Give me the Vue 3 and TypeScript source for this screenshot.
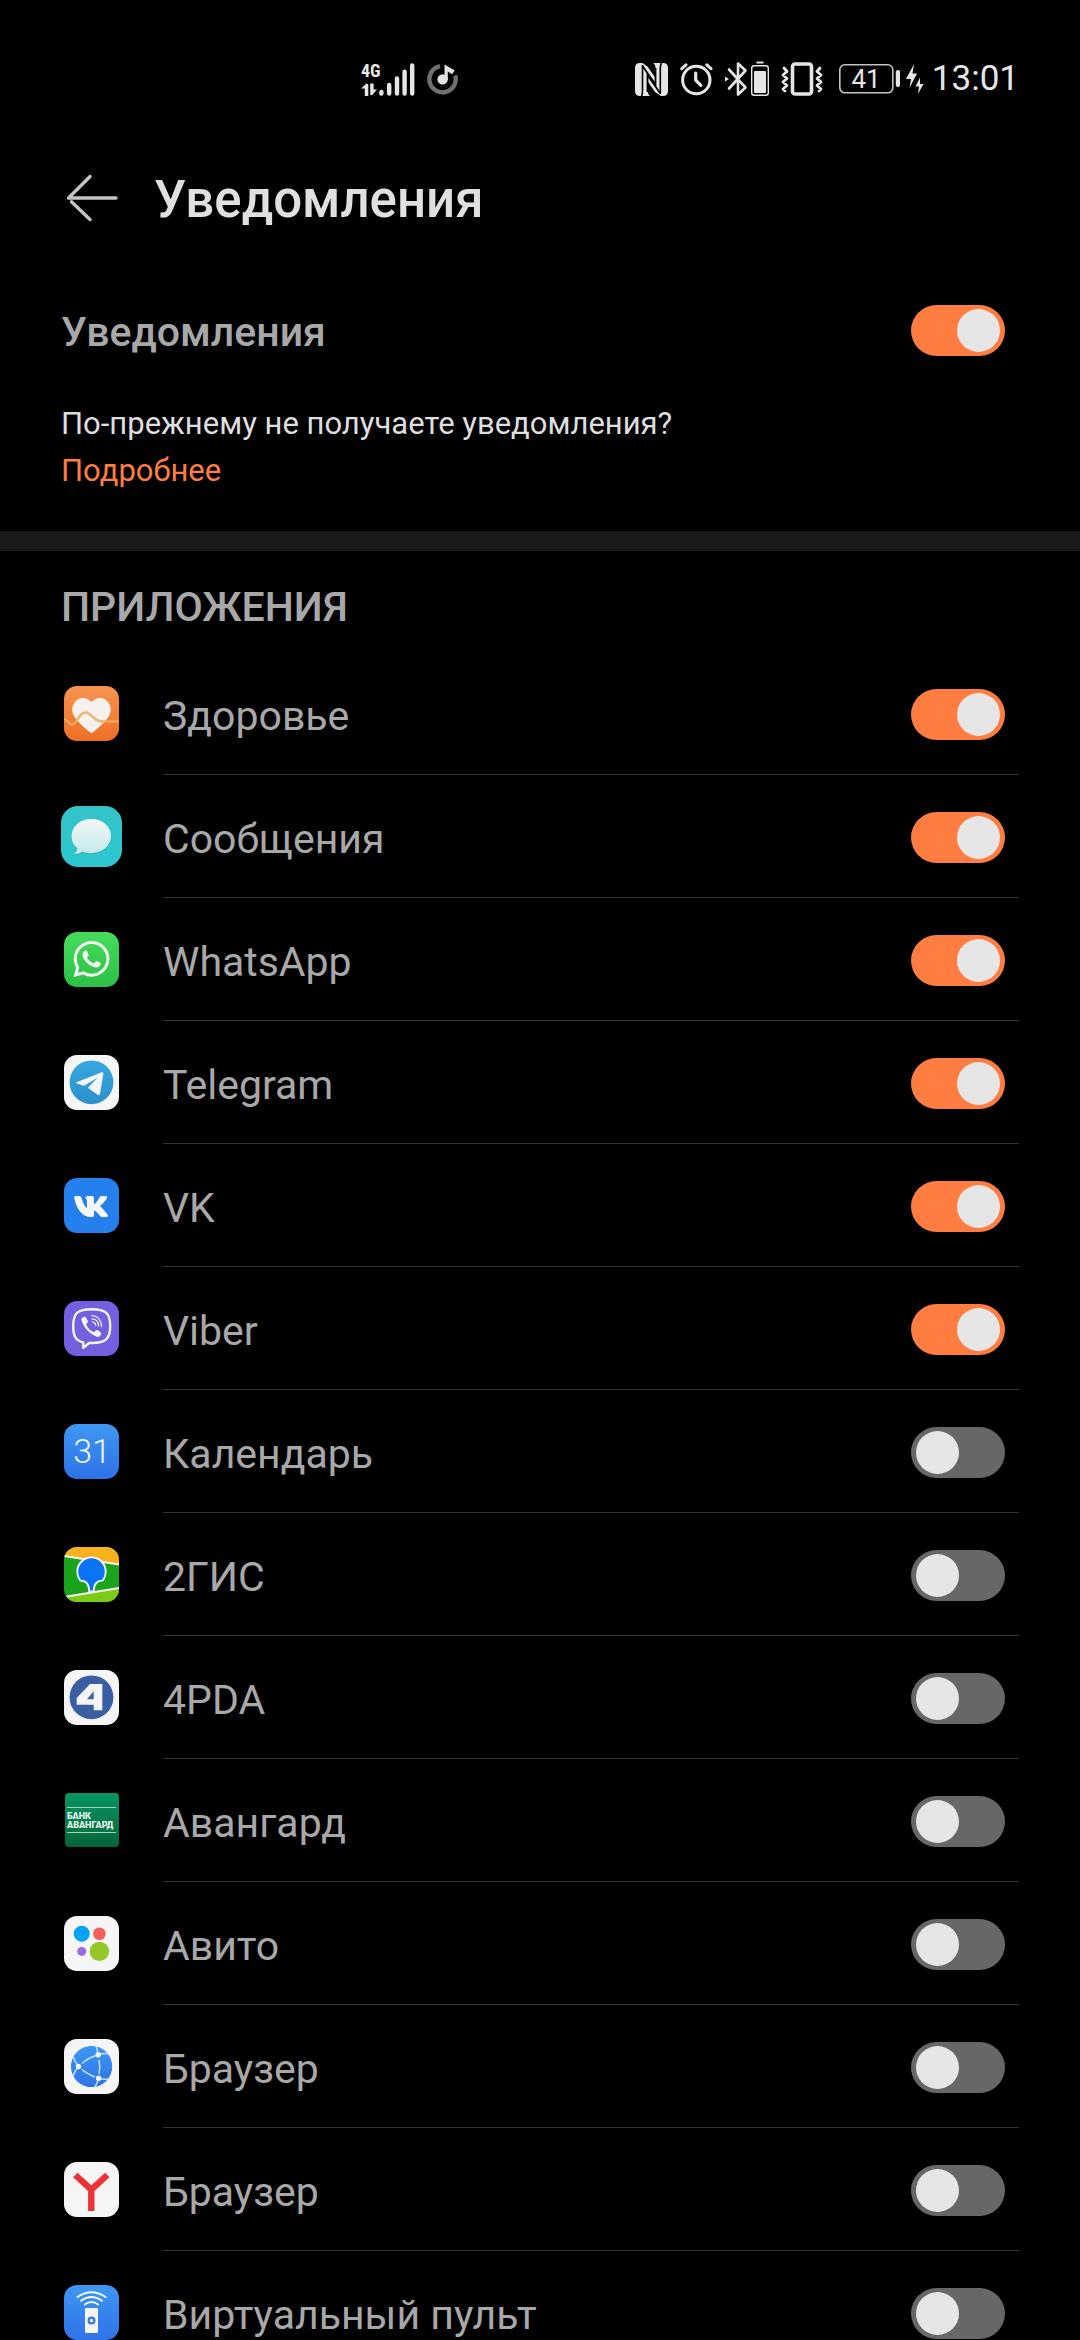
<script setup lang="ts">
import { ref } from 'vue'

interface AppEntry {
  id: string
  name: string
  enabled: boolean
}

const allEnabled = ref(true)

const apps = ref<AppEntry[]>([
  { id: 'health', name: 'Здоровье', enabled: true },
  { id: 'messages', name: 'Сообщения', enabled: true },
  { id: 'whatsapp', name: 'WhatsApp', enabled: true },
  { id: 'telegram', name: 'Telegram', enabled: true },
  { id: 'vk', name: 'VK', enabled: true },
  { id: 'viber', name: 'Viber', enabled: true },
  { id: 'calendar', name: 'Календарь', enabled: false },
  { id: '2gis', name: '2ГИС', enabled: false },
  { id: '4pda', name: '4PDA', enabled: false },
  { id: 'avangard', name: 'Авангард', enabled: false },
  { id: 'avito', name: 'Авито', enabled: false },
  { id: 'browser', name: 'Браузер', enabled: false },
  { id: 'yandex', name: 'Браузер', enabled: false },
  { id: 'remote', name: 'Виртуальный пульт', enabled: false },
])
</script>

<template>
  <div class="screen">
    <div class="status">
      <div class="status-group">
        <svg width="54" height="42" viewBox="0 -4 54 42" fill="#e6e6e6">
          <text class="network" x="0" y="15">4G</text>
          <path d="M7.3 34H3.8V26.5H0L5.5 21.5Q7.3 21.5 7.3 23ZM9.2 21.5H12.6V27.5H16L11.3 33Q9.2 34 9.2 32Z" />
          <g stroke="#e6e6e6" stroke-width="4.4" stroke-linecap="round">
            <path d="M20.4 30v1.5M28.2 23v8.5M36 16.5v15M43.6 9.8v21.7M51.2 3.5v28" />
          </g>
        </svg>
        <svg width="32" height="32" viewBox="0 0 32 32">
          <path d="M13 3.2A13.2 13.2 0 1 0 28.2 12.4" fill="none" stroke="#707070" stroke-width="4.4" />
          <circle cx="15.6" cy="16.4" r="5.2" fill="#e2e2e2" />
          <path d="M17.5 17V1.6L27.8 7.6 25 11.2 20.8 8.4V17Z" fill="#e2e2e2" />
        </svg>
      </div>
      <div class="status-group">
        <svg width="33" height="33" viewBox="0 0 33 33">
          <path fill="#e6e6e6" d="M5 0H7.5L12.5 3.5 20.5 15V6Q20.5 2 18.5 0H28Q33 0 33 5V28Q33 33 28 33H26L20 29 12.5 18V27Q12.5 31 15 33H5Q0 33 0 28V5Q0 0 5 0Z" />
          <path fill="none" stroke="#000" stroke-width="1.6" d="M7.5 2V28Q7.5 31 6.5 33M25.3 31V5Q25.3 2 26.5 0" />
          <path fill="none" stroke="#000" stroke-width="1.8" d="M7.5 3 20.5 21.5V5M12.5 29V12L25 30" />
        </svg>
        <svg width="33" height="34" viewBox="0 0 33 34" fill="none" stroke="#e6e6e6" stroke-linecap="round">
          <circle cx="16.3" cy="18" r="13.7" stroke-width="3" />
          <path d="M15.7 11V18L20.8 23.4" stroke-width="3.2" />
          <path d="M1.8 6.7 6 2.8M31 6.7 26.8 2.8" stroke-width="3" />
        </svg>
        <svg width="44" height="36" viewBox="0 0 44 36" fill="none" stroke="#e6e6e6">
          <path d="M4 8.5 20.5 26.5 13 33.5V2.5L20.5 9.5 4 27.5" stroke-width="2.6" stroke-linejoin="round" stroke-linecap="round" />
          <path d="M0 15.5 4 18 0 20.5Z" fill="#e6e6e6" stroke="none" />
          <rect x="26.7" y="4.7" width="16.6" height="29.6" rx="2.5" stroke-width="1.4" />
          <path d="M31.5 1.5h7" stroke-width="2" />
          <rect x="29" y="10" width="12" height="22" rx="1" fill="#e6e6e6" stroke="none" />
        </svg>
        <svg width="42" height="34" viewBox="0 0 42 34" fill="none" stroke="#e6e6e6" stroke-linejoin="round" stroke-linecap="round">
          <rect x="11.5" y="2" width="19" height="30" rx="2.5" stroke-width="3.6" />
          <path d="M3 6l3 3.5-4 3.5 4 3.5-4 3.5 4 3.5-4 3.5 2 2M39 6l-3 3.5 4 3.5-4 3.5 4 3.5-4 3.5 4 3.5-2 2" stroke-width="2.8" />
        </svg>
        <svg class="battery" width="61" height="30" viewBox="0 0 61 30">
          <rect x="0.8" y="0.8" width="53" height="28" rx="5" fill="none" stroke="#c4c4c4" stroke-width="1.6" />
          <rect x="56.8" y="6" width="4.2" height="17" rx="2" fill="#e6e6e6" />
          <text class="battery-level" x="27" y="24" text-anchor="middle">41</text>
        </svg>
        <svg class="bolts" width="18" height="30" viewBox="0 0 18 30" fill="#e6e6e6">
          <path d="M8 0 0 15H5L3.5 24 11 9.5H6.5ZM14 13.5 9.5 22.5H13L12 30 17.5 20H14Z" />
        </svg>
        <time class="clock">13:01</time>
      </div>
    </div>

    <header class="header">
      <button class="back" type="button" aria-label="Назад">
        <svg width="52" height="48" viewBox="0 0 52 48" fill="none" stroke="#c4c4c4" stroke-width="3.4" stroke-linecap="round">
          <path d="M24 2.5 2.5 24H50M5.5 27.8 24 45.5" stroke-linejoin="round" />
        </svg>
      </button>
      <h1>Уведомления</h1>
    </header>

    <label class="master">
      <span class="master-name">Уведомления</span>
      <input v-model="allEnabled" class="switch" type="checkbox" role="switch" />
    </label>

    <p class="help">
      По-прежнему не получаете уведомления?<br />
      <a href="#more">Подробнее</a>
    </p>

    <section class="apps">
      <h2>ПРИЛОЖЕНИЯ</h2>
      <ul>
        <li v-for="app in apps" :key="app.id">
          <label class="row">
            <span class="icon">
              <svg v-if="app.id === 'health'" width="55" height="55" viewBox="0 0 55 55">
                <defs>
                  <linearGradient id="g-health" x2="0" y2="1"><stop stop-color="#f79450" /><stop offset="1" stop-color="#ee6f26" /></linearGradient>
                  <clipPath id="c-heart"><path d="M27.5 47.3C24 45 12 35 9.5 29 4 16 19 6 27.5 16 36 6 51 16 45.5 29 43 35 31 45 27.5 47.3Z" /></clipPath>
                </defs>
                <rect width="55" height="55" rx="13" fill="url(#g-health)" />
                <path d="M27.5 47.3C24 45 12 35 9.5 29 4 16 19 6 27.5 16 36 6 51 16 45.5 29 43 35 31 45 27.5 47.3Z" fill="#f6f0ee" />
                <path d="M0 33Q3 34 5 37 7.5 40.5 11 37L17 28.5Q22 24.5 26 28.5L32 33.5Q34.5 35.5 39 35.5H55" fill="none" stroke="#f9ab66" stroke-width="2" />
                <path d="M0 33Q3 34 5 37 7.5 40.5 11 37L17 28.5Q22 24.5 26 28.5L32 33.5Q34.5 35.5 39 35.5H55" fill="none" stroke="#ecba78" stroke-width="2.4" clip-path="url(#c-heart)" />
              </svg>
              <svg v-else-if="app.id === 'messages'" width="61" height="61" viewBox="0 0 61 61">
                <defs>
                  <linearGradient id="g-msg" x2="0" y2="1"><stop stop-color="#33c3c8" /><stop offset="1" stop-color="#2cc7cf" /></linearGradient>
                  <linearGradient id="g-bubble" x2="0" y2="1"><stop stop-color="#f2f8f7" /><stop offset="1" stop-color="#c3e9e9" /></linearGradient>
                </defs>
                <rect width="61" height="61" rx="17" fill="url(#g-msg)" />
                <path d="M30.3 14C19 14 10.5 21.5 10.5 31 10.5 36.5 12.5 40.5 16.3 43.5 16 46 15 47.5 13 49 16 49.5 19 48.5 21.3 46.7 24 47.8 27 48.2 30.3 48.2 41.5 48.2 50 40.5 50 31 50 21.5 41.5 14 30.3 14Z" fill="#1f8f98" opacity=".5" />
                <path d="M30.3 13C19 13 10.5 20.5 10.5 30 10.5 35.5 12.5 39.5 16.3 42.5 16 45 15 46.5 13 48 16 48.5 19 47.5 21.3 45.7 24 46.8 27 47.2 30.3 47.2 41.5 47.2 50 39.5 50 30 50 20.5 41.5 13 30.3 13Z" fill="url(#g-bubble)" />
              </svg>
              <svg v-else-if="app.id === 'whatsapp'" width="55" height="55" viewBox="0 0 55 55">
                <defs><linearGradient id="g-wa" x2="0" y2="1"><stop stop-color="#45dc5c" /><stop offset="1" stop-color="#2cc044" /></linearGradient></defs>
                <rect width="55" height="55" rx="13" fill="url(#g-wa)" />
                <path transform="translate(9.5 9) scale(1.5)" fill="#f2fbf2" d="M17.472 14.382c-.297-.149-1.758-.867-2.03-.967-.273-.099-.471-.148-.67.15-.197.297-.767.966-.94 1.164-.173.199-.347.223-.644.075-.297-.15-1.255-.463-2.39-1.475-.883-.788-1.48-1.761-1.653-2.059-.173-.297-.018-.458.13-.606.134-.133.298-.347.446-.52.149-.174.198-.298.298-.497.099-.198.05-.371-.025-.52-.075-.149-.669-1.612-.916-2.207-.242-.579-.487-.5-.669-.51-.173-.008-.371-.01-.57-.01-.198 0-.52.074-.792.372-.272.297-1.04 1.016-1.04 2.479 0 1.462 1.065 2.875 1.213 3.074.149.198 2.096 3.2 5.077 4.487.709.306 1.262.489 1.694.625.712.227 1.36.195 1.871.118.571-.085 1.758-.719 2.006-1.413.248-.694.248-1.289.173-1.413-.074-.124-.272-.198-.57-.347m-5.421 7.403h-.004a9.87 9.87 0 0 1-5.031-1.378l-.361-.214-3.741.982.998-3.648-.235-.374a9.86 9.86 0 0 1-1.51-5.26c.001-5.45 4.436-9.884 9.888-9.884 2.64 0 5.122 1.03 6.988 2.898a9.825 9.825 0 0 1 2.893 6.994c-.003 5.45-4.437 9.884-9.885 9.884m8.413-18.297A11.815 11.815 0 0 0 12.05 0C5.495 0 .16 5.335.157 11.892c0 2.096.547 4.142 1.588 5.945L.057 24l6.305-1.654a11.882 11.882 0 0 0 5.683 1.448h.005c6.554 0 11.89-5.335 11.893-11.893a11.821 11.821 0 0 0-3.48-8.413Z" />
              </svg>
              <svg v-else-if="app.id === 'telegram'" width="55" height="55" viewBox="0 0 55 55">
                <defs><linearGradient id="g-tg" x2="0" y2="1"><stop stop-color="#38a6e0" /><stop offset="1" stop-color="#2b91cb" /></linearGradient></defs>
                <rect width="55" height="55" rx="13" fill="#f5f5f5" />
                <circle cx="27.5" cy="27.3" r="21.9" fill="url(#g-tg)" />
                <path d="M12.5 27.2 37.8 17.2Q39.7 16.8 39.4 18.8L36 38.8Q35.5 41 33.5 39.8L24.5 33.3Q24 32.5 24.7 31.7L34 22.6 20.5 30.5Q19.8 30.8 19 30.5L12.5 28.3Q11.5 27.7 12.5 27.2Z" fill="#f5f5f5" />
              </svg>
              <svg v-else-if="app.id === 'vk'" width="55" height="55" viewBox="0 0 55 55">
                <rect width="55" height="55" rx="13" fill="#2480ec" />
                <path fill="#f5f7fa" d="M11.5 18H15.5Q17 18 17.3 19.5C19 25 21 29 23 30V23.5C23 21 22 20.5 21.5 20Q21.8 18 23.5 18H28.5Q30 18 30 20V26.5C32 25 34.5 21.5 35.5 19.5Q36.3 18 37.5 18H42Q43.5 18 43 19.8C41.5 23.5 37 27.5 36 28 37.5 29.5 41.5 33.5 43.8 37Q44.5 39 42.5 39H38Q36.8 39 35.5 37.3C33.5 34.5 31.5 33 30 32.5V37Q30 39 28.5 39H27C19 39 12.5 32 10.3 20Q10 18 11.5 18Z" />
              </svg>
              <svg v-else-if="app.id === 'viber'" width="55" height="55" viewBox="0 0 55 55">
                <rect width="55" height="55" rx="13" fill="#735fe0" />
                <path d="M19.3 46.8V41.5C11.5 39.5 9.2 35 9.2 25 9.2 12 14 8.2 27.7 8.2S46.2 12 46.2 25 41.5 42 27.7 42H25Z" fill="none" stroke="#f5f5f7" stroke-width="2.4" stroke-linejoin="round" />
                <path d="M17.3 18.5C18 16.5 19.5 15.5 20.7 15.7 22 16.5 23.5 18.8 24 20 24.3 21.5 22.3 22 22.3 23.5 23.5 27 26 29.5 29.5 31 31 31 31.5 29 33 29 34.5 29.3 37 31.3 37.3 32.5 37 34.5 35 36.3 33.5 36 26 33 19.5 27 17.3 18.5Z" fill="#f5f5f7" />
                <path d="M27.5 14.5Q37.3 15.5 37.5 25.5M28 17.8Q34.5 18.3 34.5 24.8M28.5 21Q31.5 21.3 31.7 24.3" fill="none" stroke="#f5f5f7" stroke-width="1.2" stroke-linecap="round" />
              </svg>
              <svg v-else-if="app.id === 'calendar'" width="55" height="55" viewBox="0 0 55 55">
                <defs><linearGradient id="g-cal" x2="0" y2="1"><stop stop-color="#3e97f3" /><stop offset="1" stop-color="#2f72e8" /></linearGradient></defs>
                <rect width="55" height="55" rx="13" fill="url(#g-cal)" />
                <text class="calendar-day" x="28" y="39" text-anchor="middle">31</text>
              </svg>
              <svg v-else-if="app.id === '2gis'" width="55" height="55" viewBox="0 0 55 55">
                <defs><clipPath id="c-gis"><rect width="55" height="55" rx="13" /></clipPath></defs>
                <g clip-path="url(#c-gis)">
                  <rect width="55" height="55" fill="#1aa31b" />
                  <path d="M0 0H55V17.5L0 9Z" fill="#f9b21b" />
                  <path d="M0 50 55 41V55H0Z" fill="#7dcb19" />
                  <path d="M0 9 55 17.5M0 50 55 41" stroke="#f5f5f5" stroke-width="1.8" />
                  <path d="M25.2 44.7C25.2 37 22.5 33.6 16.5 33.6A14.2 14.2 0 1 1 38.5 33.6C32.5 33.6 29.8 37 29.8 44.2Z" fill="#0a74f5" stroke="#f5f5f5" stroke-width="1.8" />
                </g>
              </svg>
              <svg v-else-if="app.id === '4pda'" width="55" height="55" viewBox="0 0 55 55">
                <rect width="55" height="55" rx="13" fill="#f5f5f5" />
                <circle cx="27.5" cy="27.3" r="21.9" fill="#3a5ea3" />
                <path fill="#f5f5f5" fill-rule="evenodd" d="M26 14H38.3V40.3H29.7V34.7H12.7V28ZM29.7 21.3 23 29.3H29.7Z" />
              </svg>
              <svg v-else-if="app.id === 'avangard'" width="55" height="55" viewBox="0 0 55 55">
                <defs><linearGradient id="g-av" x2="0" y2="1"><stop stop-color="#089566" /><stop offset="1" stop-color="#046538" /></linearGradient></defs>
                <rect x="1" width="54" height="54" rx="4" fill="url(#g-av)" />
                <path d="M3 14.5H52M3 39.5H52" stroke="#a9d3c0" stroke-width="1" />
                <text class="bank" x="3" y="26">БАНК</text>
                <text class="bank" x="3" y="35">АВАНГАРД</text>
              </svg>
              <svg v-else-if="app.id === 'avito'" width="55" height="55" viewBox="0 0 55 55">
                <rect width="55" height="55" rx="13" fill="#f5f5f5" />
                <circle cx="17.7" cy="17.7" r="8" fill="#04a2f3" />
                <circle cx="35.4" cy="17.7" r="6.3" fill="#f5605e" />
                <circle cx="17.7" cy="35.4" r="4.5" fill="#9a68e2" />
                <circle cx="35.4" cy="35.4" r="9.7" fill="#93c828" />
              </svg>
              <svg v-else-if="app.id === 'browser'" width="55" height="55" viewBox="0 0 55 55">
                <defs>
                  <linearGradient id="g-br" x2="0" y2="1"><stop stop-color="#3d97f2" /><stop offset="1" stop-color="#2e74e6" /></linearGradient>
                  <clipPath id="c-br"><circle cx="27.6" cy="27.5" r="20.8" /></clipPath>
                </defs>
                <rect width="55" height="55" rx="13" fill="#f5f5f5" />
                <g clip-path="url(#c-br)">
                  <circle cx="27.6" cy="27.5" r="20.8" fill="url(#g-br)" />
                  <g fill="none" stroke="#bfe3f8" stroke-width="1.5">
                    <path d="M18 24.5Q24 19 32 16.5M18 30.5Q23 35 31 38M35 21Q36.7 28 35 35" />
                    <path d="M31.5 6Q33.5 10 34 15.7M34 15.7Q41 13.5 46 15M14.5 27.5Q10.5 22 8.5 16M14.5 27.5Q10.5 32 9 37M34.5 39.3Q33 45 30 50M34.5 39.3Q41 41 46 39.5" />
                  </g>
                  <circle cx="14.5" cy="27.5" r="2.7" fill="#f5f5f5" />
                  <circle cx="34.2" cy="15.7" r="2.7" fill="#f5f5f5" />
                  <circle cx="34.6" cy="39.3" r="2.7" fill="#f5f5f5" />
                </g>
              </svg>
              <svg v-else-if="app.id === 'yandex'" width="55" height="55" viewBox="0 0 55 55">
                <rect width="55" height="55" rx="13" fill="#f5f5f5" />
                <path d="M11.3 13 27.3 27.7 43.3 13M27.3 27V49" fill="none" stroke="#ec3237" stroke-width="6.4" />
              </svg>
              <svg v-else width="55" height="55" viewBox="0 0 55 55">
                <defs><linearGradient id="g-rc" x2="0" y2="1"><stop stop-color="#3e97f3" /><stop offset="1" stop-color="#2f72e8" /></linearGradient></defs>
                <rect width="55" height="55" rx="13" fill="url(#g-rc)" />
                <rect x="21" y="23" width="13" height="25" rx="1" fill="#f5f5f5" />
                <circle cx="27.5" cy="35.6" r="2.9" fill="none" stroke="#3079e8" stroke-width="2.2" />
                <path d="M13.5 12Q27.5 2.5 41.5 12M17 15.7Q27.5 8.5 38 15.7M20.8 19.5Q27.5 14.5 34.2 19.5" fill="none" stroke="#f2f6fc" stroke-width="2" stroke-linecap="round" />
              </svg>
            </span>
            <span class="entry">
              <span class="name">{{ app.name }}</span>
              <input v-model="app.enabled" class="switch" type="checkbox" role="switch" />
            </span>
          </label>
        </li>
      </ul>
    </section>
  </div>
</template>

<style>
html,
body {
  background: #000;
}
</style>

<style scoped>
.screen {
  display: flex;
  flex-direction: column;
  height: 100vh;
  overflow: hidden;
  background: #000;
  color: #a8a8a8;
  font-family: Roboto, "Noto Sans", sans-serif;
}

svg {
  display: block;
  flex: none;
}

.status {
  display: flex;
  flex: none;
  justify-content: space-between;
  align-items: center;
  padding: 58px 61px 20px 361px;
}

.status-group {
  display: flex;
  align-items: center;
  gap: 12px;
  height: 42px;
}

.battery {
  margin-left: 4px;
}

.bolts {
  margin: 0 -4px 0 -6px;
}

.network {
  font: 700 18px "Liberation Sans Narrow", "Roboto Condensed", "DejaVu Sans Condensed", sans-serif;
}

.battery-level {
  font-size: 26px;
  fill: #e6e6e6;
}

.clock {
  color: #e6e6e6;
  font-size: 35px;
  line-height: 42px;
}

.header {
  display: flex;
  flex: none;
  align-items: center;
  gap: 36px;
  height: 156px;
  padding: 0 61px 0 66px;
}

.back {
  padding: 0;
  border: 0;
  background: none;
}

h1 {
  margin: 0;
  padding-top: 3px;
  color: #e0e0e0;
  font-size: 51px;
  font-weight: 500;
  line-height: 60px;
}

.master {
  display: flex;
  flex: none;
  align-items: center;
  justify-content: space-between;
  height: 109px;
  padding: 0 75px 0 61px;
}

.master-name {
  padding-top: 3px;
  font-size: 41px;
  font-weight: 500;
  line-height: 48px;
}

.help {
  flex: none;
  margin: 0;
  padding: 15px 61px 37px;
  color: #dedede;
  font-size: 31px;
  line-height: 47px;
}

.help a {
  color: #ff7d41;
  text-decoration: none;
}

.apps {
  flex: 1;
  min-height: 0;
  overflow: auto;
  scrollbar-width: none;
  border-top: 20px solid #1a1a1a;
}

h2 {
  margin: 0;
  padding: 28px 61px 17px;
  font-size: 41px;
  font-weight: 500;
  line-height: 56px;
}

ul {
  margin: 0;
  padding: 0 61px;
  list-style: none;
}

.row {
  display: flex;
  align-items: stretch;
  gap: 41px;
  height: 123px;
}

.icon {
  display: flex;
  flex: none;
  align-items: center;
  justify-content: center;
  width: 61px;
}

.entry {
  display: flex;
  flex: 1;
  align-items: center;
  justify-content: space-between;
  padding: 3px 14px 0 0;
  border-bottom: 1px solid #333;
}

.name {
  padding-top: 3px;
  font-size: 41px;
  line-height: 48px;
}

.switch {
  flex: none;
  width: 94px;
  height: 51px;
  margin: 0;
  padding: 4px 5px;
  box-sizing: border-box;
  appearance: none;
  border-radius: 26px;
  background: #676767;
}

.switch::before {
  content: "";
  display: block;
  width: 43px;
  height: 43px;
  border-radius: 50%;
  background: #e6e6e6;
}

.switch:checked {
  background: #ff7d41;
}

.switch:checked::before {
  margin-left: auto;
}

.calendar-day {
  font-size: 34px;
  font-weight: 300;
  fill: #f0f6fd;
}

.bank {
  font-size: 9px;
  font-weight: 900;
  fill: #e3f2ea;
}
</style>
